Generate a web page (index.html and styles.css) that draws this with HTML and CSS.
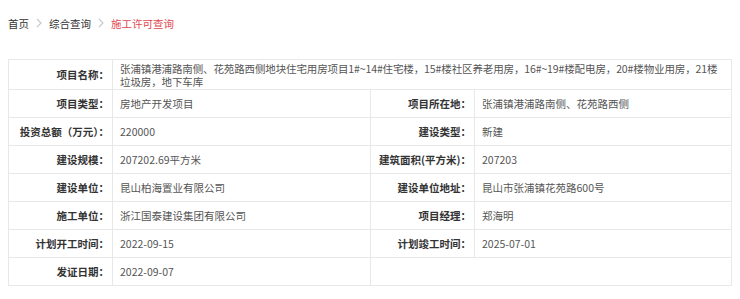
FILE: index.html
```html
<!DOCTYPE html>
<html lang="zh-CN">
<head>
<meta charset="utf-8">
<title>施工许可查询</title>
<link rel="stylesheet" href="styles.css">
</head>
<body>
<div class="page">
  <nav class="crumbs">
    <span class="crumb">首页</span>
    <svg class="sep" viewBox="0 0 6 10" width="6" height="10"><path d="M1 1l4 4-4 4" fill="none" stroke="#c8c8c8" stroke-width="1.1"/></svg>
    <span class="crumb">综合查询</span>
    <svg class="sep" viewBox="0 0 6 10" width="6" height="10"><path d="M1 1l4 4-4 4" fill="none" stroke="#c8c8c8" stroke-width="1.1"/></svg>
    <span class="crumb current">施工许可查询</span>
  </nav>
  <table class="info">
    <colgroup>
      <col class="c-label"><col class="c-value"><col class="c-label"><col class="c-value2">
    </colgroup>
    <tr class="tall">
      <th>项目名称：</th>
      <td colspan="3" class="wrap">张浦镇港浦路南侧、花苑路西侧地块住宅用房项目1#~14#住宅楼，15#楼社区养老用房，16#~19#楼配电房，20#楼物业用房，21楼垃圾房，地下车库</td>
    </tr>
    <tr>
      <th>项目类型：</th><td>房地产开发项目</td>
      <th>项目所在地：</th><td>张浦镇港浦路南侧、花苑路西侧</td>
    </tr>
    <tr>
      <th>投资总额（万元）：</th><td>220000</td>
      <th>建设类型：</th><td>新建</td>
    </tr>
    <tr>
      <th>建设规模：</th><td>207202.69平方米</td>
      <th>建筑面积(平方米)：</th><td>207203</td>
    </tr>
    <tr>
      <th>建设单位：</th><td>昆山柏海置业有限公司</td>
      <th>建设单位地址：</th><td>昆山市张浦镇花苑路600号</td>
    </tr>
    <tr>
      <th>施工单位：</th><td>浙江国泰建设集团有限公司</td>
      <th>项目经理：</th><td>郑海明</td>
    </tr>
    <tr>
      <th>计划开工时间：</th><td>2022-09-15</td>
      <th>计划竣工时间：</th><td>2025-07-01</td>
    </tr>
    <tr>
      <th>发证日期：</th><td>2022-09-07</td>
      <td class="empty" colspan="2"></td>
    </tr>
  </table>
</div>
</body>
</html>
```

FILE: styles.css
```css
html, body {
  margin: 0;
  padding: 0;
  background: #ffffff;
}
.page {
  padding: 8px;
  font-family: "Noto Sans CJK SC", "Noto Sans", sans-serif;
  font-size: 10.5px;
  color: #555;
}
.crumbs {
  display: flex;
  align-items: center;
  height: 30px;
  margin-bottom: 21px;
  color: #333;
}
.sep {
  margin: 0 7px 0 7px;
}
.crumb.current {
  color: #e2474f;
}
.info {
  width: 723px;
  table-layout: fixed;
  border-collapse: collapse;
}
.c-label { width: 104px; }
.c-value { width: 258px; }
.c-value2 { width: 257px; }
.info tr {
  height: 28px;
}
.info tr.tall {
  height: 30px;
}
.info th, .info td {
  border: 1px solid #e8e8e8;
  padding: 0;
  vertical-align: middle;
  line-height: 13px;
}
.info th {
  text-align: right;
  font-weight: bold;
  color: #333;
  padding-right: 3px;
  white-space: nowrap;
}
.info td {
  text-align: left;
  padding-left: 7px;
  color: #555;
}
.info td.wrap {
  padding-right: 10px;
  letter-spacing: -0.12px;
}
```
